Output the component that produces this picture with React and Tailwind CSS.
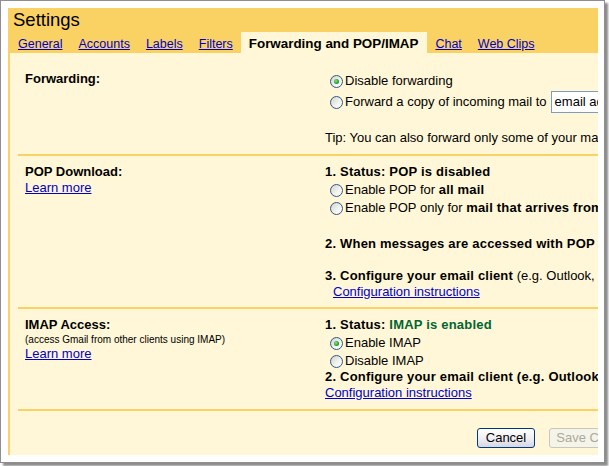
import React from "react";

const font = { fontFamily: '"Liberation Sans", Arial, sans-serif' };

function Radio({ checked }) {
  return (
    <span className="flex items-center justify-center w-[13px] h-[13px] rounded-full border border-[#2a5a8a] bg-[linear-gradient(135deg,#d4d4ce_0%,#f4f4f0_60%,#ffffff_100%)] shrink-0 mr-[2px]">
      {checked && (
        <span className="block w-[5px] h-[5px] rounded-full bg-[radial-gradient(circle_at_40%_40%,#8ee08e_0%,#21a121_60%,#1a7f1a_100%)]" />
      )}
    </span>
  );
}

function Link({ children, className = "" }) {
  return <a className={"text-[#0000cc] underline cursor-pointer " + className}>{children}</a>;
}

function Sep() {
  return <div className="h-[2px] bg-[#fad163] w-[700px]" />;
}

export default function App() {
  return (
    <div className="w-[609px] h-[466px] bg-white overflow-hidden" style={font}>
      <div className="w-[605px] h-[463px] border border-[#8f8f8f] bg-white shadow-[3px_3px_2px_rgba(0,0,0,0.45)] pt-[7px] pl-[7px] pr-[6px]">
        <div className="w-[590px] overflow-hidden text-black">
          {/* Header */}
          <div className="bg-[#fad163]">
            <div className="h-[24px] pl-[5px] text-[18.5px] leading-[24px] text-black">Settings</div>
            <div className="h-[21px] pl-[2px] flex text-[12.5px] leading-[18px] whitespace-nowrap">
              <div className="px-2 pt-[3px]"><Link>General</Link></div>
              <div className="px-2 pt-[3px]"><Link>Accounts</Link></div>
              <div className="px-2 pt-[3px]"><Link>Labels</Link></div>
              <div className="px-2 pt-[3px]"><Link>Filters</Link></div>
              <div className="pl-2 pr-[9px] pt-[3px] bg-[#fff7d7] font-bold text-[13.4px]">Forwarding and POP/IMAP</div>
              <div className="px-2 pt-[3px]"><Link>Chat</Link></div>
              <div className="px-2 pt-[3px]"><Link>Web Clips</Link></div>
            </div>
          </div>

          {/* Content */}
          <div className="h-[402px] bg-[#fff7d7] border-l-2 border-[#fad163] pl-[8px] text-[13px] whitespace-nowrap">
            {/* Forwarding */}
            <div className="h-[101px] flex">
              <div className="w-[307px] shrink-0 pl-[7px] pt-[17px] leading-[18px] font-bold">Forwarding:</div>
              <div className="pt-[18px] flex flex-col">
                <div className="h-[20px] leading-[20px] flex items-center pl-[5px]">
                  <Radio checked />
                  <span>Disable forwarding</span>
                </div>
                <div className="h-[22px] leading-[20px] flex items-center pl-[5px]">
                  <Radio />
                  <span>Forward a copy of incoming mail to</span>
                  <div className="ml-[4px] h-[22px] w-[160px] shrink-0 border border-[#7f9db9] bg-white pl-[3px] leading-[20px]">email address</div>
                </div>
                <div className="mt-[16px] leading-[18px]">Tip: You can also forward only some of your mail by creating a filter!</div>
              </div>
            </div>
            <Sep />

            {/* POP */}
            <div className="h-[151px] flex">
              <div className="w-[307px] shrink-0 pl-[7px] pt-[8px] leading-[16px]">
                <div className="font-bold">POP Download:</div>
                <Link>Learn more</Link>
              </div>
              <div className="pt-[8px] flex flex-col leading-[16px]">
                <div className="font-bold tracking-[0.2px]">1. Status: POP is disabled</div>
                <div className="mt-[2px] flex items-center pl-[5px]">
                  <Radio />
                  <span>Enable POP for <b className="tracking-[0.2px]">all mail</b></span>
                </div>
                <div className="mt-[2px] flex items-center pl-[5px]">
                  <Radio />
                  <span>Enable POP only for <b className="tracking-[0.2px]">mail that arrives from now on</b></span>
                </div>
                <div className="mt-[20px] font-bold tracking-[0.2px]">2. When messages are accessed with POP</div>
                <div className="mt-[16px]"><b className="tracking-[0.2px]">3. Configure your email client</b> (e.g. Outlook, Eudora, Netscape Mail)</div>
                <div className="pl-[8px]"><Link>Configuration instructions</Link></div>
              </div>
            </div>
            <Sep />

            {/* IMAP */}
            <div className="h-[100px] flex">
              <div className="w-[307px] shrink-0 pl-[7px] pt-[8px]">
                <div className="font-bold leading-[16px]">IMAP Access:</div>
                <div className="text-[10px] leading-[13px]">(access Gmail from other clients using IMAP)</div>
                <div className="leading-[16px]"><Link>Learn more</Link></div>
              </div>
              <div className="pt-[8px] flex flex-col leading-[16px]">
                <div className="font-bold tracking-[0.2px]">1. Status: <span className="text-[#006633]">IMAP is enabled</span></div>
                <div className="mt-[2px] flex items-center pl-[5px]">
                  <Radio checked />
                  <span>Enable IMAP</span>
                </div>
                <div className="mt-[2px] flex items-center pl-[5px]">
                  <Radio />
                  <span>Disable IMAP</span>
                </div>
                <div className="font-bold tracking-[0.2px]">2. Configure your email client (e.g. Outlook, Eudora, Netscape Mail)</div>
                <div><Link>Configuration instructions</Link></div>
              </div>
            </div>
            <Sep />

            {/* Buttons */}
            <div className="h-[44px] flex items-start pt-[17px] pl-[459px] gap-[14px]">
              <button className="h-[20px] w-[58px] shrink-0 border border-[#003c74] rounded-[3px] bg-[linear-gradient(180deg,#ffffff_0%,#f0f0f4_50%,#d6d6e6_100%)] text-[13px] leading-[18px] text-black">Cancel</button>
              <button className="h-[20px] w-[100px] shrink-0 border border-[#c9c7ba] rounded-[3px] bg-[#f5f4ea] text-[13px] leading-[18px] text-[#aca899]">Save Changes</button>
            </div>
          </div>
        </div>
      </div>
    </div>
  );
}
